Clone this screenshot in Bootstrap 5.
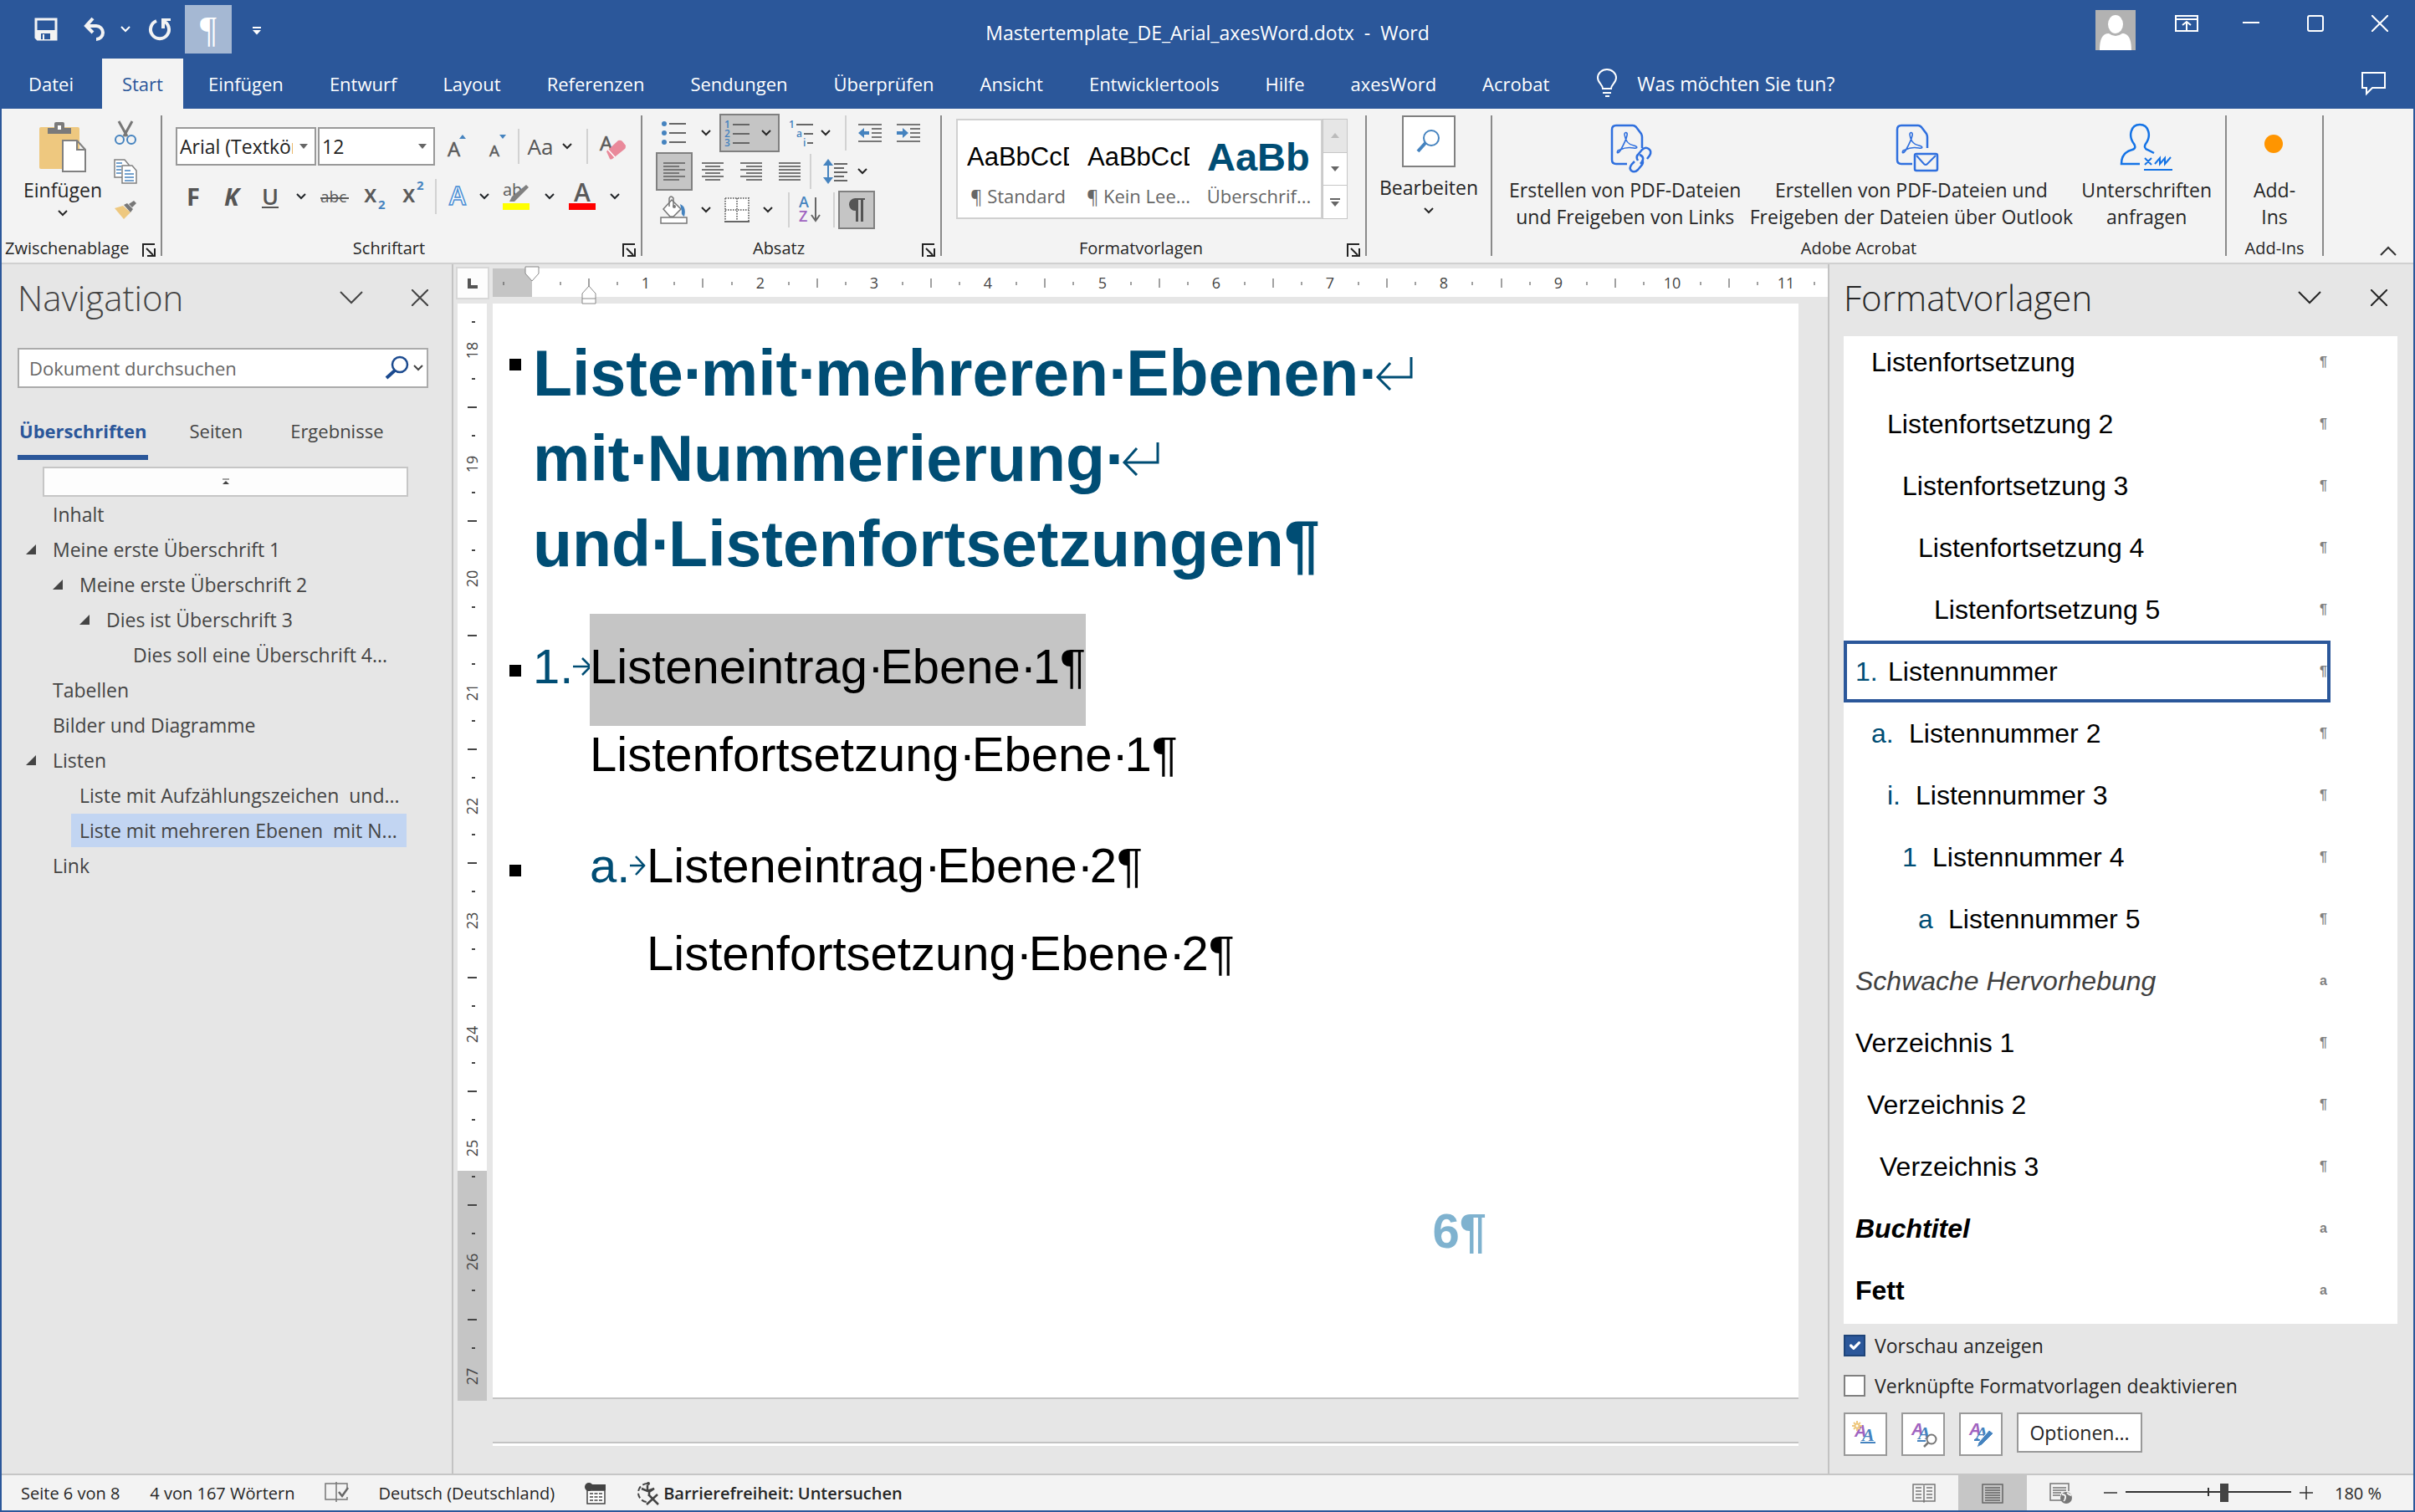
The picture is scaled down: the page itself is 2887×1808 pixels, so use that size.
<!DOCTYPE html>
<html lang="de">
<head>
<meta charset="utf-8">
<meta name="viewport" content="width=device-width, initial-scale=1">
<title>Mastertemplate_DE_Arial_axesWord.dotx - Word</title>
<link href="https://cdn.jsdelivr.net/npm/bootstrap@5.3.0/dist/css/bootstrap.min.css" rel="stylesheet">
<style>
:root{--word:#2b579a;--ribbon:#f3f3f3;--pane:#e6e6e6;--ink:#262626;--doc:#004d74;--line:#8a8a8a}
body{font-family:"Open Sans","Noto Sans",sans-serif;font-size:23px;line-height:32px;color:var(--ink);background:var(--pane)}
svg{display:block;flex-shrink:0;overflow:visible}
button{font-family:inherit;color:inherit}
.app{border:2px solid var(--word);border-top:0}
.tb{border:0;background:none;padding:0;display:flex;align-items:center;justify-content:center;flex-shrink:0;line-height:32px}
/* title bar */
.titlebar{background:var(--word);color:#fff;height:70px}
.side{flex:1 1 0}
.qat{padding:6px 0 0}
.qat .tb{height:58px}
.qat .tb:first-child{margin-left:29px}
.qat .on{background:#a5b8d3;width:56px;font:44px "Liberation Serif",serif;margin-left:4px}
.win .tb{width:77px;height:40px}
.win .tb:last-child{margin-right:2px}
.avatar{margin:12px 22px 0 0}
/* tab strip */
.tabs{background:var(--word);height:60px;padding-left:5px;gap:1px;font-size:22px}
.tabs a{color:#fff;text-decoration:none;padding:0 27px;height:60px;line-height:60px}
.tabs a.active{background:var(--ribbon);color:var(--word);padding:0 24px;margin:0 2px 0 6px}
.tabs a.ask{font-size:23px;padding:0 22px}
.bulb{margin-left:28px}
/* ribbon */
.ribbon{background:var(--ribbon);height:186px;border-bottom:2px solid #d0d0d0}
.grp{display:flex;flex-direction:column;padding:6px 0 7px;flex-shrink:0}
.cut{width:2px;background:var(--line);margin:8px 0;flex-shrink:0}
.grp-name{font-size:20px;line-height:20px;display:flex;align-items:flex-end;margin-top:auto;padding-right:6px}
.grp-name span{flex:1;text-align:center;padding-right:8px}
.grp-name.plain{padding:0}
.grp-name.plain span{padding:0}
.rule{width:2px;height:42px;background:#d2d2d2;flex-shrink:0}
.g-clip{width:190px}.g-font{width:572px}.g-para{width:356px}.g-style{width:506px}.g-edit{width:148px}.g-acro{width:876px}.g-add{width:114px}
.big{flex-direction:column;justify-content:flex-start;text-align:center}
.big .pic{height:60px;margin:10px 0 5px;display:flex;align-items:center}
.big .pic-pdf{padding:2px 0 0 14px}
.acro-row{padding:0 16px 0 20px}
.k14{width:14px}.k20{width:20px}.k24{width:24px}.k32{width:32px}.k36{width:36px}.k42{width:42px}.k44{width:44px}.k48{width:48px}.k50{width:50px}.k60{width:60px}.k64{width:64px}.k82{width:82px}.k106{width:106px}
.h46{height:46px}
.on-box{background:#c5c5c5;border:2px solid #808080}
.combo{appearance:none;height:46px;border:2px solid #999;border-radius:0;background:#fff url("data:image/svg+xml,%3Csvg xmlns='http://www.w3.org/2000/svg' width='10' height='7'%3E%3Cpath d='M0 0h10L5 6z' fill='%23666'/%3E%3C/svg%3E") no-repeat right 8px center;padding:0 26px 0 3px;color:#222}
.combo-a{width:168px;margin-right:2px}.combo-b{width:140px;margin-right:3px}
.glyph{color:#555}
.fx{font-size:29px;font-weight:700}
.fu{font-size:27px;font-weight:600}
.fa{font-size:26px}
.style-row{margin:6px 0 0 17px}
.gallery{border:2px solid #d0d0d0;background:#fff;height:120px;width:438px}
.gallery .tb{width:144px;flex-direction:column;justify-content:flex-start;color:#666;font-size:22px}
.prev{font:31px/40px "Liberation Sans",Arial,sans-serif;color:#000;width:122px;overflow:hidden;white-space:nowrap;text-align:left;margin:24px 0 6px;height:44px}
.prev-h{font-size:47px;font-weight:700;color:var(--doc);overflow:visible;width:124px}
.scroller{width:30px;border:1px solid #c6c6c6;background:#fff;height:120px}
.scroller .tb{width:28px;flex:1;border-bottom:1px solid #c6c6c6}
.scroller .tb:first-child{background:#e6e6e6}
.findbox{margin:2px 0 8px}
/* task panes */
.pane-head{padding:16px 0 22px}
.pane-title{font-size:42px;line-height:48px;font-weight:300;margin:0}
.navpane{width:540px;border-right:2px solid #c3c3c3;color:#444;flex-shrink:0;padding:0 28px 0 19px}
.nav-gap{margin-right:58px}
.find{border:2px solid #ababab;background:#fff;height:48px;margin:14px 0 32px;font-size:22px}
.find input{border:0;outline:0;background:none;padding:0 0 0 12px;min-width:0;flex:1;height:40px}
.find input::placeholder{color:#666;opacity:1}
.ntabs{gap:49px;font-size:22px}
.ntabs a{color:#444;text-decoration:none;height:54px;line-height:38px}
.ntabs a:last-child{margin-left:8px}
.ntabs .active{color:var(--word);font-weight:700;border-bottom:6px solid var(--word);padding:0 2px}
.jump{border:2px solid #c6c6c6;background:#fdfdfd;height:36px;margin:8px 24px 0 30px}
.tree{list-style:none;margin:0;padding:0 26px 0 0}
.tree li{display:flex;height:42px;align-items:center}
.tree svg{margin:0 0 0 10px}
.tree a{color:#444;text-decoration:none;white-space:pre;line-height:40px;height:40px;margin-left:20px}
.tree .leaf a{margin-left:32px;padding-left:10px;flex:1}
.tree .d1{margin-left:32px}.tree .d2{margin-left:64px}.tree .d3{margin-left:96px}
.tree .here a{background:#c2d5f2}
/* document */
.docarea{min-width:0}
.corner{width:40px;height:39px;border:2px solid #d8d8d8;background:#fdfdfd;margin:3px 4px 5px 3px}
.hr-box{height:34px;margin-top:5px;z-index:1}
.vr-box{width:35px;margin:0 7px 0 5px;flex-shrink:0;height:1312px}
.tick{font:18px "Open Sans","Noto Sans",sans-serif;fill:#444;text-anchor:middle}
.sheet{background:#fff;border-bottom:2px solid #c3c3c3;margin-right:35px;font:58px/66px "Liberation Sans",Arial,sans-serif;color:#000;padding-top:32px}
.nextsheet{background:#fff;border-top:2px solid #c3c3c3;height:5px;margin:51px 35px 33px 0}
.mk{width:48px;flex-shrink:0;padding-left:20px}
.mk::before{content:"";display:block;width:14px;height:14px;background:#000}
.mk-h{padding-top:34px}.mk-1{padding-top:61px}.mk-2{padding-top:32px}
.sheet h1{font-size:77px;line-height:102px;font-weight:700;color:var(--doc);margin:0}
.sp{display:inline-block;width:15px;text-align:center}
h1 .sp{width:21px}
.sheet h1 svg{display:inline-block;vertical-align:6px;margin-left:-2px}
.num{color:var(--doc);width:68px;display:flex;align-items:center;justify-content:space-between;flex-shrink:0}
.e1{margin-top:33px}
.e1 .num{padding:30px 0 38px}
.hit{background:#c5c5c5;padding:30px 0 38px}
.c1{margin-left:116px;margin-top:1px}
.e2{margin-top:67px}
.i2{margin-left:68px}
.c2{margin-left:184px;margin-top:39px}
.pageno{color:#7fb2cf;font-weight:700;text-align:right;padding-right:373px;margin-top:266px}
/* styles pane */
.stylepane{width:700px;border-left:2px solid #c3c3c3;flex-shrink:0;padding:0 19px 0 17px}
.style-gap{margin-right:59px}
.stylebox{background:#fff;overflow:hidden;height:1181px}
.stylebox ul{list-style:none;padding:0;margin:-6px 80px 0 0;font:32px/74px "Liberation Sans",Arial,sans-serif;color:#000}
.stylebox li{height:74px;display:flex;white-space:pre;padding-left:14px}
.stylebox li small{margin-left:auto;font:bold 16px/74px "Liberation Sans",Arial,sans-serif;color:#808080;padding-right:4px}
.stylebox i.n{font-style:normal;color:var(--doc)}
.stylebox .cur{border:4px solid var(--word);padding-left:10px;line-height:66px}
.stylebox .cur small{line-height:66px;padding-right:0}
.stylebox .s1{padding-left:33px}.stylebox .s2{padding-left:52px}.stylebox .s3{padding-left:70px}.stylebox .s4{padding-left:89px}.stylebox .s5{padding-left:108px}
.stylebox .v2{padding-left:28px}.stylebox .v3{padding-left:43px}
.stylebox em{color:#404040}
.n1{width:39px}.n2{width:45px}.n3{width:34px}.n4{width:36px}
.tick-rows{padding-top:2px}
.tick-row{height:48px;gap:11px}
.tick-row .form-check-input[type=checkbox]{width:26px;height:26px;margin:0;border:2px solid #808080;border-radius:0;background-color:#fff;flex-shrink:0}
.tick-row .form-check-input[type=checkbox]:checked{background-color:var(--word);border-color:#1e4479}
.pbtns{gap:17px;padding-top:8px}
.pbtn{border:2px solid #999;background:#fff;width:52px;height:52px}
.pbtn.opt{width:150px;height:48px}
.sa{font:italic 700 20px "Liberation Sans",Arial,sans-serif;fill:#a063c0}
.sb{font:italic 700 22px "Liberation Serif",serif;fill:#4583bf}
/* status bar */
.status{background:var(--ribbon);border-top:2px solid #c6c6c6;height:44px;font-size:20px;padding-left:23px}
.status .tb{height:42px;padding-top:2px}
.info{gap:36px}
.zoomer{width:198px;position:relative;height:42px}
.zoomer::before{content:"";position:absolute;left:98px;top:15px;width:2px;height:10px;background:#333}
.zoomer input{appearance:none;width:100%;height:42px;margin:0;background:linear-gradient(#333,#333) 0 19px/100% 2px no-repeat;position:relative;display:block}
.zoomer input::-webkit-slider-thumb{appearance:none;width:10px;height:22px;background:#444}
.view-on{background:#c6c6c6}
.percent{margin:0 38px 0 16px}
</style>
</head>
<body>
<svg width="0" height="0" class="position-absolute" aria-hidden="true">
<symbol id="ch" viewBox="0 0 12 8"><path d="M1 1l5 5 5-5" fill="none" stroke="currentColor" stroke-width="2"/></symbol>
<symbol id="bigch" viewBox="0 0 28 16"><path d="M1 1l13 13L27 1" fill="none" stroke="currentColor" stroke-width="2"/></symbol>
<symbol id="x" viewBox="0 0 20 20"><path d="M0 0l20 20M20 0L0 20" fill="none" stroke="currentColor" stroke-width="2"/></symbol>
<symbol id="launch" viewBox="0 0 16 16"><path d="M1 16V1h14M5 6l8 8M15 6v9H6" fill="none" stroke="#222" stroke-width="2"/></symbol>
<symbol id="tri" viewBox="0 0 12 12"><path d="M12 0v12H0z" fill="#444"/></symbol>
<symbol id="ret" viewBox="0 0 48 42"><path d="M44 2v24H5M19 9L4 26l15 15" fill="none" stroke="#004d74" stroke-width="3"/></symbol>
<symbol id="pdf" viewBox="0 0 50 58"><path d="M20 48H7q-5 0-5-5V7q0-5 5-5h20q2 0 4 2l6 8q1 2 1 4v13" fill="none" stroke="#2f6fde" stroke-width="2.5"/><path d="M9 32c-2 4 1 3 3 0 4-7 7-13 8-18 1-4-3-5-3-1 1 7 5 12 11 13 5 1 5 4 0 3-6-1-12 0-16 2-2 1-2 0-3 1z" fill="none" stroke="#2f6fde" stroke-width="1.6"/></symbol>
</svg>
<div class="app min-vh-100 d-flex flex-column">
<header>
 <div class="titlebar d-flex">
  <div class="side qat d-flex">
    <button class="tb k48" aria-label="Speichern"><svg width="26" height="26"><path d="M1 1h24v24H3l-2-2z" fill="none" stroke="#f3f3f3" stroke-width="3"/><path d="M2 14h22v11H2z" fill="#f3f3f3"/><path d="M7 18h11v7H7z" fill="#2b579a"/><path d="M9 19h2v6H9z" fill="#f3f3f3"/></svg></button>
    <button class="tb k64 ps-1" aria-label="Rückgängig"><svg width="26" height="28"><path d="M2 10h13a8 8 0 0 1 0 16M11 1L3 10l8 8" fill="none" stroke="#f3f3f3" stroke-width="4"/></svg></button>
    <button class="tb k14 text-white" aria-label="Rückgängig-Verlauf"><svg width="12" height="8"><use href="#ch"/></svg></button>
    <button class="tb k60 ps-2" aria-label="Wiederholen"><svg width="28" height="28"><path d="M10 4a11 11 0 1 0 8 0" fill="none" stroke="#f3f3f3" stroke-width="4"/><path d="M16 1h11v3l-7 0v9h-4z" fill="#f3f3f3"/></svg></button>
    <button class="tb on" aria-label="Alle anzeigen">¶</button>
    <button class="tb k60 pt-1" aria-label="Anpassen"><svg width="10" height="10"><path d="M0 1h10" stroke="#fff" stroke-width="2"/><path d="M0 4h10L5 9.500z" fill="#fff"/></svg></button>
  </div>
  <div class="align-self-center pt-2 text-nowrap">Mastertemplate_DE_Arial_axesWord.dotx &nbsp;-&nbsp; Word</div>
  <div class="side win d-flex justify-content-end">
   <svg class="avatar" width="48" height="48"><path d="M0 0h48v48H0z" fill="#b2b2b2"/><ellipse cx="24" cy="17" rx="9" ry="11" fill="#fff"/><path d="M5 48c0-13 3-20 11-20q8 6 16 0c8 0 11 7 11 20z" fill="#fff"/></svg>
   <div class="d-flex pt-2">
   <button class="tb" aria-label="Menüband-Anzeigeoptionen"><svg width="28" height="20"><path d="M1 1h26v18H1zM1 5h26M14 18V8M9 12l5-4 5 4" fill="none" stroke="#fff" stroke-width="2"/></svg></button>
   <button class="tb" aria-label="Minimieren"><svg width="20" height="20"><path d="M0 9h20" stroke="#fff" stroke-width="2"/></svg></button>
   <button class="tb" aria-label="Maximieren"><svg width="20" height="20"><rect x="1" y="1" width="18" height="18" rx="2" fill="none" stroke="#fff" stroke-width="2"/></svg></button>
   <button class="tb text-white" aria-label="Schließen"><svg width="20" height="20"><use href="#x"/></svg></button>
   </div>
  </div>
 </div>
 <nav class="tabs d-flex text-nowrap align-items-center">
  <a href="#">Datei</a><a href="#" class="active">Start</a><a href="#">Einfügen</a><a href="#">Entwurf</a><a href="#">Layout</a><a href="#">Referenzen</a><a href="#">Sendungen</a><a href="#">Überprüfen</a><a href="#">Ansicht</a><a href="#">Entwicklertools</a><a href="#">Hilfe</a><a href="#">axesWord</a><a href="#">Acrobat</a>
  <svg class="bulb" width="26" height="34"><path d="M8 23c0-5-6-7-6-13a11 10 0 0 1 22 0c0 6-6 8-6 13zM8 28h10M11 32h5" fill="none" stroke="#fff" stroke-width="2"/></svg>
  <a href="#" class="ask">Was möchten Sie tun?</a>
  <button class="tb ms-auto me-4 pe-2" aria-label="Kommentare"><svg width="30" height="28"><path d="M1 1h27v18H13l-7 7v-7H1z" fill="none" stroke="#fff" stroke-width="2"/></svg></button>
 </nav>
 <section class="ribbon d-flex">
  <div class="grp g-clip">
   <div class="d-flex ps-3 ms-1">
    <button class="tb big k106"><span class="pic"><svg width="56" height="60"><path d="M0 8q0-2 2-2h44q2 0 2 2v46q0 2-2 2H2q-2 0-2-2z" fill="#eec87f"/><path d="M10 14V7h8V2q0-2 2-2h8q2 0 2 2v5h8v7z" fill="#7a7a7a"/><path d="M22 4h4v5h-4z" fill="#fff"/><path d="M28 22h17l10 11v26H28zM45 22v11h10" fill="#fff" stroke="#808080" stroke-width="2"/></svg></span>Einfügen<svg class="mt-2" width="12" height="8"><use href="#ch"/></svg></button>
    <div>
     <button class="tb k44 h46" aria-label="Ausschneiden"><svg width="26" height="28"><path d="M5 0l10 18M21 0L11 18" stroke="#777" stroke-width="3"/><circle cx="6" cy="22" r="5" fill="none" stroke="#4583bf" stroke-width="2"/><circle cx="20" cy="22" r="5" fill="none" stroke="#4583bf" stroke-width="2"/></svg></button>
     <button class="tb k44 h46" aria-label="Kopieren"><svg width="28" height="30"><g fill="#fff" stroke="#808080" stroke-width="1.500"><path d="M1 1h12l5 6v15H1z"/><path d="M10 8h12l5 6v15H10z"/></g><path d="M3 5h7M3 9h6M3 13h6M3 17h6M13 14h7M13 18h11M13 22h11M13 26h11" stroke="#4583bf" stroke-width="1.500"/></svg></button>
     <button class="tb k44 h46" aria-label="Format übertragen"><svg width="26" height="22"><path d="M0 9l10-3 9 8-8 8z" fill="#eec87f"/><path d="M11 5l4-2 7 7-3 4zM17 4l6-4 3 3-5 5z" fill="#777"/></svg></button>
    </div>
   </div>
   <div class="grp-name"><span class="text-start ps-1">Zwischenablage</span><svg width="16" height="16"><use href="#launch"/></svg></div>
  </div>
  <div class="cut"></div>
  <div class="grp g-font">
   <div class="d-flex align-items-center mt-3 ms-3">
    <select class="combo combo-a" aria-label="Schriftart"><option>Arial (Textkörper)</option></select>
    <select class="combo combo-b" aria-label="Schriftgrad"><option>12</option></select>
    <button class="tb k48" aria-label="Schrift vergrößern"><svg width="24" height="28"><text x="0" y="26" font-size="24" fill="#5a5a5a" stroke="#5a5a5a" stroke-width=".5">A</text><path d="M14 5h8l-4-5z" fill="#4583bf"/></svg></button>
    <button class="tb k48" aria-label="Schrift verkleinern"><svg width="24" height="28"><text x="2" y="26" font-size="19" fill="#5a5a5a" stroke="#5a5a5a" stroke-width=".5">A</text><path d="M14 0h8l-4 5z" fill="#4583bf"/></svg></button>
    <div class="rule"></div>
    <button class="tb k50 glyph" aria-label="Groß-/Kleinschreibung"><span class="fa">Aa</span></button>
    <button class="tb k14" aria-label="Groß-/Kleinschreibung Menü"><svg width="12" height="8"><use href="#ch"/></svg></button>
    <div class="rule ms-3"></div>
    <button class="tb k60" aria-label="Formatierung löschen"><svg width="32" height="32"><text x="0" y="21" font-size="24" fill="#5a5a5a" stroke="#5a5a5a" stroke-width=".6">A</text><path d="M8 22l14-13q3-1 5 1l4 5q0 3-1 4L15 31q-2 1-3 0z" fill="#e9899a"/><path d="M10 20l8 9" stroke="#fff" stroke-width="1.500"/></svg></button>
   </div>
   <div class="d-flex align-items-center mt-3 ms-3 glyph">
    <button class="tb k42" aria-label="Fett"><span class="fx">F</span></button>
    <button class="tb k50" aria-label="Kursiv"><span class="fx fst-italic">K</span></button>
    <button class="tb k42" aria-label="Unterstrichen"><span class="fu text-decoration-underline">U</span></button>
    <button class="tb k32 text-dark" aria-label="Unterstreichungsart"><svg width="12" height="8"><use href="#ch"/></svg></button>
    <button class="tb k48" aria-label="Durchgestrichen"><svg width="34" height="26"><text x="0" y="20" font-size="19" fill="#5a5a5a">abc</text><path d="M0 15h34" stroke="#5a5a5a" stroke-width="2"/></svg></button>
    <button class="tb k48" aria-label="Tiefgestellt"><svg width="26" height="34"><text x="0" y="24" font-size="28" font-weight="600" fill="#5a5a5a">x</text><text x="17" y="32" font-size="15" font-weight="700" fill="#4583bf">2</text></svg></button>
    <button class="tb k44" aria-label="Hochgestellt"><svg width="26" height="34"><text x="0" y="24" font-size="28" font-weight="600" fill="#5a5a5a">x</text><text x="17" y="9" font-size="15" font-weight="700" fill="#4583bf">2</text></svg></button>
    <div class="rule ms-1"></div>
    <button class="tb k50" aria-label="Texteffekte"><svg width="24" height="30"><text x="2" y="25" font-size="30" font-weight="600" fill="#fff" stroke="#4b8fd5" stroke-width="1.500">A</text></svg></button>
    <button class="tb k14 text-dark" aria-label="Texteffekte Menü"><svg width="12" height="8"><use href="#ch"/></svg></button>
    <button class="tb k64" aria-label="Hervorheben"><svg width="34" height="34"><text x="0" y="16" font-size="20" fill="#5a5a5a">ab</text><path d="M28 3l3 3-17 17H8l3-6z" fill="#808080"/><path d="M0 25h32v8H0z" fill="#ff0"/></svg></button>
    <button class="tb k14 text-dark" aria-label="Hervorhebungsfarbe"><svg width="12" height="8"><use href="#ch"/></svg></button>
    <button class="tb k64" aria-label="Schriftfarbe"><svg width="32" height="34"><text x="6" y="23" font-size="30" font-weight="600" fill="#5a5a5a">A</text><path d="M0 25h32v8H0z" fill="red"/></svg></button>
    <button class="tb k14 text-dark" aria-label="Schriftfarbe Menü"><svg width="12" height="8"><use href="#ch"/></svg></button>
   </div>
   <div class="grp-name"><span>Schriftart</span><svg width="16" height="16"><use href="#launch"/></svg></div>
  </div>
  <div class="cut"></div>
  <div class="grp g-para">
   <div class="ms-3">
   <div class="d-flex align-items-center h46">
    <button class="tb k44" aria-label="Aufzählungszeichen"><svg width="30" height="30"><path d="M9 4h20M9 15h20M9 26h20" stroke="#666" stroke-width="2"/><g fill="#4583bf"><circle cx="3" cy="4" r="3"/><circle cx="3" cy="15" r="3"/><circle cx="3" cy="26" r="3"/></g></svg></button>
    <button class="tb k32" aria-label="Aufzählung Menü"><svg width="12" height="8"><use href="#ch"/></svg></button>
    <button class="tb on-box h46 px-1 gap-2" aria-label="Nummerierung"><svg width="32" height="34"><g font-size="12" font-weight="600" fill="#4583bf"><text y="11">1</text><text y="22">2</text><text y="33">3</text></g><path d="M10 7h20M10 18h20M10 29h20" stroke="#666" stroke-width="2"/></svg><svg class="ms-1 me-1" width="12" height="8"><use href="#ch"/></svg></button>
    <button class="tb k44 ms-1" aria-label="Liste mit mehreren Ebenen"><svg width="30" height="34"><g font-size="12" font-weight="600" fill="#4583bf"><text y="11">1</text><text x="9" y="22">a</text><text x="17" y="33">i</text></g><path d="M9 7h20M18 18h11M22 29h7" stroke="#666" stroke-width="2"/></svg></button>
    <button class="tb k14" aria-label="Liste Menü"><svg width="12" height="8"><use href="#ch"/></svg></button>
    <div class="rule ms-3"></div>
    <button class="tb k48 ms-1" aria-label="Einzug verkleinern"><svg width="28" height="22"><path d="M0 1h28M16 6h12M16 11h12M16 16h12M0 21h28" stroke="#777" stroke-width="2"/><path d="M0 11l7-6v4h6v4H7v4z" fill="#4583bf"/></svg></button>
    <button class="tb k44" aria-label="Einzug vergrößern"><svg width="28" height="22"><path d="M0 1h28M16 6h12M16 11h12M16 16h12M0 21h28" stroke="#777" stroke-width="2"/><path d="M14 11L7 5v4H0v4h7v4z" fill="#4583bf"/></svg></button>
   </div>
   <div class="d-flex align-items-center h46">
    <button class="tb on-box h46 k44" aria-label="Linksbündig"><svg width="26" height="22"><path d="M0 1h26M0 5h19M0 9h26M0 13h19M0 17h26M0 21h19" stroke="#777" stroke-width="2"/></svg></button>
    <button class="tb k48" aria-label="Zentriert"><svg width="26" height="22"><path d="M0 1h26M4 5h18M0 9h26M4 13h18M0 17h26M4 21h18" stroke="#777" stroke-width="2"/></svg></button>
    <button class="tb k44" aria-label="Rechtsbündig"><svg width="26" height="22"><path d="M0 1h26M7 5h19M0 9h26M7 13h19M0 17h26M7 21h19" stroke="#777" stroke-width="2"/></svg></button>
    <button class="tb k48" aria-label="Blocksatz"><svg width="26" height="22"><path d="M0 1h26M0 5h26M0 9h26M0 13h26M0 17h26M0 21h26" stroke="#777" stroke-width="2"/></svg></button>
    <div class="rule"></div>
    <button class="tb k50 ms-1" aria-label="Zeilenabstand"><svg width="30" height="30"><path d="M13 6h16M13 11h12M13 16h16M13 21h12M13 26h16" stroke="#666" stroke-width="2"/><path d="M0 8l6-8 6 8H7v14h5l-6 8-6-8h5V8z" fill="#4583bf"/></svg></button>
    <button class="tb k14" aria-label="Zeilenabstand Menü"><svg width="12" height="8"><use href="#ch"/></svg></button>
   </div>
   <div class="d-flex align-items-center h46">
    <button class="tb k44" aria-label="Schattierung"><svg width="34" height="34"><path d="M4 16L14 5l11 11-9 9H12z" fill="#fff" stroke="#777" stroke-width="1.500"/><path d="M11 13V3q2-4 5 0v10" fill="none" stroke="#777" stroke-width="1.500"/><circle cx="17" cy="13" r="2" fill="#777"/><path d="M24 10q8 3 5 15-4-2-3-6z" fill="#4583bf"/><path d="M1 26h31v7H1z" fill="#fff" stroke="#777" stroke-width="1.500"/></svg></button>
    <button class="tb k32" aria-label="Schattierung Menü"><svg width="12" height="8"><use href="#ch"/></svg></button>
    <button class="tb k42" aria-label="Rahmen"><svg width="30" height="30"><path d="M1 1h28v27H1z" fill="#fff"/><path d="M1 1h28v27M1 1v27M15 1v27M1 15h28" fill="none" stroke="#777" stroke-width="2" stroke-dasharray="1.500 1.500"/><path d="M0 29h30" stroke="#666" stroke-width="2"/></svg></button>
    <button class="tb k32" aria-label="Rahmen Menü"><svg width="12" height="8"><use href="#ch"/></svg></button>
    <div class="rule ms-2"></div>
    <button class="tb k48" aria-label="Sortieren"><svg width="26" height="34"><g font-size="18" font-weight="600"><text y="14" fill="#4583bf">A</text><text y="31" fill="#a063c0">Z</text></g><path d="M20 2v27M15 23l5 7 5-7" fill="none" stroke="#666" stroke-width="2"/></svg></button>
    <div class="rule ms-1"></div>
    <button class="tb on-box k44 h46 ms-1" aria-label="Absatzmarken"><svg width="22" height="30"><path d="M9 1h12v2h-2v26h-3V3h-3v26h-3V16a7 7 0 0 1-1-15z" fill="#555"/></svg></button>
   </div>
   </div>
   <div class="grp-name"><span>Absatz</span><svg width="16" height="16"><use href="#launch"/></svg></div>
  </div>
  <div class="cut"></div>
  <div class="grp g-style">
   <div class="d-flex style-row">
    <div class="gallery d-flex">
     <button class="tb"><span class="prev">AaBbCcDd</span><span>¶ Standard</span></button>
     <button class="tb"><span class="prev">AaBbCcDd</span><span>¶ Kein Lee...</span></button>
     <button class="tb"><span class="prev prev-h">AaBb</span><span>Überschrif...</span></button>
    </div>
    <div class="scroller d-flex flex-column">
     <button class="tb" aria-label="Nach oben"><svg width="10" height="6"><path d="M0 6h10L5 0z" fill="#bbb"/></svg></button>
     <button class="tb" aria-label="Nach unten"><svg width="10" height="6"><path d="M0 0h10L5 6z" fill="#666"/></svg></button>
     <button class="tb border-0" aria-label="Weitere"><svg width="12" height="10"><path d="M0 1h12" stroke="#666" stroke-width="2"/><path d="M1 4h10L6 10z" fill="#666"/></svg></button>
    </div>
   </div>
   <div class="grp-name"><span>Formatvorlagen</span><svg width="16" height="16"><use href="#launch"/></svg></div>
  </div>
  <div class="cut"></div>
  <div class="grp g-edit align-items-center">
   <button class="tb big"><svg class="findbox" width="64" height="62"><path d="M1 1h62v60H1z" fill="#fff" stroke="#808080" stroke-width="2"/><circle cx="35" cy="27" r="9" fill="none" stroke="#4583bf" stroke-width="2"/><path d="M28 33L19 43" stroke="#4583bf" stroke-width="4"/></svg>Bearbeiten<svg class="mt-2" width="12" height="8"><use href="#ch"/></svg></button>
  </div>
  <div class="cut"></div>
  <div class="grp g-acro">
   <div class="d-flex justify-content-between acro-row">
    <button class="tb big"><span class="pic pic-pdf"><svg width="50" height="58"><use href="#pdf" width="50" height="58"/><path d="M33 44l-1-2q-1-3 1-5l5-6q4-4 8-1 4 3 1 8l-3 4M35 37q5 2 4 6-1 3-3 5M29 45l-3 3q-4 5-1 8 4 3 8-1l5-6q2-3 0-6" fill="none" stroke="#2f6fde" stroke-width="2.500"/></svg></span>Erstellen von PDF-Dateien<br>und Freigeben von Links</button>
    <button class="tb big"><span class="pic pic-pdf"><svg width="52" height="58"><use href="#pdf" width="50" height="58"/><rect x="23" y="36" width="27" height="20" rx="2" fill="#f3f3f3" stroke="#2f6fde" stroke-width="2.500"/><path d="M25 38l9 10q2 2 4 0l10-10" fill="none" stroke="#2f6fde" stroke-width="2"/></svg></span>Erstellen von PDF-Dateien und<br>Freigeben der Dateien über Outlook</button>
    <button class="tb big"><span class="pic"><svg width="64" height="58"><path d="M24 49H2c0-10 5-15 13-17 4-1 4-4 2-7-7-9-4-23 7-23s14 14 7 23c-2 3-1 6 2 7l8 4" fill="none" stroke="#1473e6" stroke-width="2.500"/><path d="M30 42l8 8M38 42l-8 8M42 49l6-7v7l6-7v7l7-8" fill="none" stroke="#1473e6" stroke-width="2"/><path d="M29 56h34" stroke="#1473e6" stroke-width="2"/></svg></span>Unterschriften<br>anfragen</button>
   </div>
   <div class="grp-name plain"><span>Adobe Acrobat</span></div>
  </div>
  <div class="cut"></div>
  <div class="grp g-add">
   <button class="tb big"><span class="pic"><svg width="22" height="50"><circle cx="10" cy="21" r="11" fill="#ff9500"/></svg></span>Add-<br>Ins</button>
   <div class="grp-name plain"><span>Add-Ins</span></div>
  </div>
  <div class="cut"></div>
  <button class="tb ms-auto align-self-end mb-2 me-3 pe-1" aria-label="Menüband reduzieren"><svg width="20" height="12"><path d="M1 11l9-9 9 9" fill="none" stroke="#333" stroke-width="2"/></svg></button>
 </section>
</header>

<main class="d-flex flex-grow-1">
 <aside class="navpane d-flex flex-column">
  <div class="pane-head d-flex align-items-center">
   <h2 class="pane-title me-auto">Navigation</h2>
   <button class="tb nav-gap" aria-label="Optionen"><svg width="28" height="16"><use href="#bigch"/></svg></button>
   <button class="tb" aria-label="Bereich schließen"><svg width="20" height="20"><use href="#x"/></svg></button>
  </div>
  <div class="find d-flex align-items-center">
   <input type="text" placeholder="Dokument durchsuchen" aria-label="Dokument durchsuchen">
   <svg width="30" height="30"><circle cx="18" cy="11" r="9" fill="none" stroke="#1b4a8f" stroke-width="2.500"/><path d="M12 18L2 27" stroke="#1b4a8f" stroke-width="4"/></svg>
   <svg class="ms-1 me-1" width="12" height="8"><use href="#ch"/></svg>
  </div>
  <div class="ntabs d-flex">
   <a href="#" class="active">Überschriften</a><a href="#">Seiten</a><a href="#">Ergebnisse</a>
  </div>
  <button class="tb jump" aria-label="Zum Anfang springen"><svg width="8" height="8"><path d="M0 1h8" stroke="#444" stroke-width="1"/><path d="M0 7h8L4 3z" fill="#444"/></svg></button>
  <ul class="tree">
   <li class="leaf"><a href="#">Inhalt</a></li>
   <li><svg width="12" height="12"><use href="#tri"/></svg><a href="#">Meine erste Überschrift 1</a></li>
   <li class="d1"><svg width="12" height="12"><use href="#tri"/></svg><a href="#">Meine erste Überschrift 2</a></li>
   <li class="d2"><svg width="12" height="12"><use href="#tri"/></svg><a href="#">Dies ist Überschrift 3</a></li>
   <li class="leaf d3"><a href="#">Dies soll eine Überschrift 4...</a></li>
   <li class="leaf"><a href="#">Tabellen</a></li>
   <li class="leaf"><a href="#">Bilder und Diagramme</a></li>
   <li><svg width="12" height="12"><use href="#tri"/></svg><a href="#">Listen</a></li>
   <li class="leaf d1"><a href="#">Liste mit Aufzählungszeichen  und...</a></li>
   <li class="leaf d1 here"><a href="#">Liste mit mehreren Ebenen  mit N...</a></li>
   <li class="leaf"><a href="#">Link</a></li>
  </ul>
 </aside>

 <section class="docarea flex-grow-1 d-flex flex-column">
  <div class="d-flex">
   <div class="corner d-flex align-items-center justify-content-center"><svg width="12" height="12"><path d="M2 0v10h10" fill="none" stroke="#555" stroke-width="4"/></svg></div>
   <svg class="hr-box flex-grow-1 position-relative" id="hruler" width="10"></svg>
  </div>
  <div class="d-flex flex-grow-1">
   <svg class="vr-box" id="vruler"></svg>
   <div class="flex-grow-1 d-flex flex-column">
    <article class="sheet flex-grow-1">
     <div class="d-flex">
      <div class="mk mk-h"></div>
      <h1>Liste<span class="sp">·</span>mit<span class="sp">·</span>mehreren<span class="sp">·</span>Ebenen<span class="sp">·</span><svg width="48" height="42"><use href="#ret"/></svg><br>mit<span class="sp">·</span>Nummerierung<span class="sp">·</span><svg width="48" height="42"><use href="#ret"/></svg><br>und<span class="sp">·</span>Listenfortsetzungen¶</h1>
     </div>
     <div class="d-flex e1">
      <div class="mk mk-1"></div>
      <div class="num">1.<svg width="23" height="22"><path d="M0 11h21M11 1l10 10-10 10" fill="none" stroke="#004d74" stroke-width="2.500"/></svg></div>
      <div class="hit">Listeneintrag<span class="sp">·</span>Ebene<span class="sp">·</span>1¶</div>
     </div>
     <div class="c1">Listenfortsetzung<span class="sp">·</span>Ebene<span class="sp">·</span>1¶</div>
     <div class="d-flex e2">
      <div class="mk mk-2"></div>
      <div class="num i2">a.<svg width="20" height="26"><path d="M0 13h18M7 2l10 11L7 24" fill="none" stroke="#004d74" stroke-width="2.500"/></svg></div>
      <div>Listeneintrag<span class="sp">·</span>Ebene<span class="sp">·</span>2¶</div>
     </div>
     <div class="c2">Listenfortsetzung<span class="sp">·</span>Ebene<span class="sp">·</span>2¶</div>
     <div class="pageno">6¶</div>
    </article>
    <div class="nextsheet"></div>
   </div>
  </div>
 </section>

 <aside class="stylepane">
  <div class="pane-head d-flex align-items-center">
   <h2 class="pane-title me-auto">Formatvorlagen</h2>
   <button class="tb style-gap" aria-label="Bereichsoptionen"><svg width="28" height="16"><use href="#bigch"/></svg></button>
   <button class="tb me-2 pe-1" aria-label="Formatvorlagen schließen"><svg width="20" height="20"><use href="#x"/></svg></button>
  </div>
  <div class="stylebox">
   <ul>
    <li class="s1">Listenfortsetzung<small>¶</small></li>
    <li class="s2">Listenfortsetzung 2<small>¶</small></li>
    <li class="s3">Listenfortsetzung 3<small>¶</small></li>
    <li class="s4">Listenfortsetzung 4<small>¶</small></li>
    <li class="s5">Listenfortsetzung 5<small>¶</small></li>
    <li class="cur"><i class="n n1">1.</i>Listennummer<small>¶</small></li>
    <li class="s1"><i class="n n2">a.</i>Listennummer 2<small>¶</small></li>
    <li class="s2"><i class="n n3">i.</i>Listennummer 3<small>¶</small></li>
    <li class="s3"><i class="n n4">1</i>Listennummer 4<small>¶</small></li>
    <li class="s4"><i class="n n4">a</i>Listennummer 5<small>¶</small></li>
    <li><em>Schwache Hervorhebung</em><small>a</small></li>
    <li>Verzeichnis 1<small>¶</small></li>
    <li class="v2">Verzeichnis 2<small>¶</small></li>
    <li class="v3">Verzeichnis 3<small>¶</small></li>
    <li><b class="fst-italic">Buchtitel</b><small>a</small></li>
    <li><b>Fett</b><small>a</small></li>
   </ul>
  </div>
  <div class="tick-rows">
  <div class="tick-row d-flex align-items-center"><input class="form-check-input" type="checkbox" id="pv" checked><label for="pv">Vorschau anzeigen</label></div>
  <div class="tick-row d-flex align-items-center"><input class="form-check-input" type="checkbox" id="lk"><label for="lk">Verknüpfte Formatvorlagen deaktivieren</label></div>
  </div>
  <div class="pbtns d-flex">
   <button class="tb pbtn" aria-label="Neue Formatvorlage"><svg width="30" height="30"><text class="sa" x="2" y="18">A</text><text class="sb" x="11" y="23">A</text><path d="M9 25h18" stroke="#4583bf" stroke-width="2"/><path d="M5-1v12M-1 5h12M1 1l8 8M9 1L1 9" stroke="#eec87f" stroke-width="2"/><circle cx="5" cy="5" r="2.500" fill="#fff" stroke="#eec87f" stroke-width="2"/></svg></button>
   <button class="tb pbtn" aria-label="Formatinspektor"><svg width="30" height="30"><text class="sa" x="1" y="16">A</text><text class="sb" x="9" y="21">A</text><path d="M8 23h10" stroke="#4583bf" stroke-width="2"/><circle cx="25" cy="21" r="5.500" fill="#fff" stroke="#777" stroke-width="2"/><path d="M21 25l-5 5" stroke="#777" stroke-width="2.500"/></svg></button>
   <button class="tb pbtn" aria-label="Formatvorlagen verwalten"><svg width="30" height="30"><text class="sa" x="1" y="16">A</text><text class="sb" x="9" y="21">A</text><path d="M7 22h7" stroke="#4583bf" stroke-width="2"/><path d="M25 10l5 4-14 14-6 3 2-6z" fill="#4583bf" stroke="#fff"/></svg></button>
   <button class="tb pbtn opt">Optionen...</button>
  </div>
 </aside>
</main>

<footer class="status d-flex align-items-center text-nowrap">
 <div class="info d-flex">
 <button class="tb">Seite 6 von 8</button>
 <button class="tb">4 von 167 Wörtern</button>
 <button class="tb pb-1" aria-label="Rechtschreibprüfung"><svg width="28" height="26"><path d="M14 3H1v19h13M14 1v24M14 3h13v5M14 22h13v-3" fill="none" stroke="#777" stroke-width="1.500"/><path d="M17 13l4 5 7-10" fill="none" stroke="#666" stroke-width="2.500"/></svg></button>
 <button class="tb">Deutsch (Deutschland)</button>
 <button class="tb" aria-label="Makroaufzeichnung"><svg width="26" height="26"><path d="M3 9h21v16H3z" fill="#fff" stroke="#444" stroke-width="1.500"/><path d="M9 2h16v7H9z" fill="#444"/><circle cx="5" cy="5" r="5" fill="#444"/><path d="M6 13h15M6 17h15M6 21h15" stroke="#444" stroke-width="1.500" stroke-dasharray="4 1.500"/></svg></button>
 <button class="tb fw-semibold gap-1"><svg width="28" height="30"><path d="M13 3A11 11 0 1 0 13 25" fill="none" stroke="#444" stroke-width="2" stroke-dasharray="6 3"/><circle cx="14" cy="3" r="2" fill="#444"/><path d="M13 5v6M6 9l7 3 8-3-6 4v5M14 16l12 12M25 16L12 28" fill="none" stroke="#444" stroke-width="2.500"/></svg>Barrierefreiheit: Untersuchen</button>
 </div>
 <div class="d-flex align-items-center ms-auto">
  <button class="tb k82" aria-label="Lesemodus"><svg width="28" height="26"><path d="M1 2h12l1 1 1-1h12v20H15l-1 1-1-1H1zM14 2v22" fill="none" stroke="#777" stroke-width="1.500"/><path d="M4 6h7M4 10h7M4 14h7M4 18h7M17 6h7M17 10h7M17 14h7M17 18h7" stroke="#777" stroke-width="1.500"/></svg></button>
  <button class="tb k82 view-on" aria-label="Drucklayout"><svg width="26" height="24"><path d="M1 1h24v22H1zM4 5h18M4 8h18M4 11h18M4 14h18M4 17h18M4 20h18" fill="none" stroke="#666" stroke-width="1.500"/></svg></button>
  <button class="tb k82" aria-label="Weblayout"><svg width="28" height="26"><path d="M14 21H1V1h22v9M4 6h16M4 9h16M4 12h10M4 15h9" fill="none" stroke="#777" stroke-width="1.500"/><circle cx="20" cy="18" r="7" fill="#777"/><path d="M15 14q5 0 4 4t-2 3M21 12q3 3 5 3" stroke="#f3f3f3" stroke-width="2" fill="none"/></svg></button>
  <button class="tb k36 pt-0" aria-label="Verkleinern"><svg width="16" height="16"><path d="M0 8h16" stroke="#333" stroke-width="1.500"/></svg></button>
  <div class="zoomer"><input type="range" min="0" max="100" value="60" aria-label="Zoom"></div>
  <button class="tb k36 pt-0" aria-label="Vergrößern"><svg width="16" height="16"><path d="M0 8h16M8 0v16" stroke="#333" stroke-width="1.500"/></svg></button>
  <button class="tb percent">180 %</button>
 </div>
</footer>
</div>
<script src="https://cdn.jsdelivr.net/npm/bootstrap@5.3.0/dist/js/bootstrap.bundle.min.js"></script>
<script>
// Rulers: one labelled centimetre every 136.3 px, a tick at the half and dots at the quarters.
const CM = 136.3;
function drawH() {
  const el = document.getElementById('hruler'), w = el.getBoundingClientRect().width, zero = 47;
  let s = `<rect width="${w}" height="34" fill="#fff"/><rect width="${zero}" height="34" fill="#c5c5c5"/>`;
  for (let q = -1; zero + q * CM / 4 < w - 4; q++) {
    const x = Math.round(zero + q * CM / 4);
    if (q === 0) continue;
    if (q % 4 === 0) s += `<text class="tick" x="${x}" y="24">${q / 4}</text>`;
    else if (q % 2 === 0) s += `<path d="M${x} 12v11" stroke="#444"/>`;
    else s += `<path d="M${x} 16v4" stroke="#444"/>`;
  }
  s += `<path d="M39 -2h16v8l-8 9-8-9z" fill="#fff" stroke="#888"/><path d="M107 42v-12l8-9 8 9v12zM107 36h16" fill="#fff" stroke="#888"/>`;
  el.innerHTML = s;
}
function drawV() {
  const el = document.getElementById('vruler'), h = 1312, first = 56;
  let s = `<rect width="35" height="${h}" fill="#fff"/><rect y="1037" width="35" height="${h - 1037}" fill="#c5c5c5"/>`;
  for (let q = -1; first + q * CM / 4 < h - 4; q++) {
    const y = Math.round(first + q * CM / 4);
    if (q % 4 === 0) s += `<text class="tick" transform="translate(24 ${y}) rotate(-90)">${18 + q / 4}</text>`;
    else if (q % 2 === 0) s += `<path d="M12 ${y}h11" stroke="#444" stroke-width="2"/>`;
    else s += `<path d="M17 ${y}h4" stroke="#444" stroke-width="2"/>`;
  }
  el.innerHTML = s;
}
drawH(); drawV();
addEventListener('resize', drawH);
</script>
</body>
</html>
